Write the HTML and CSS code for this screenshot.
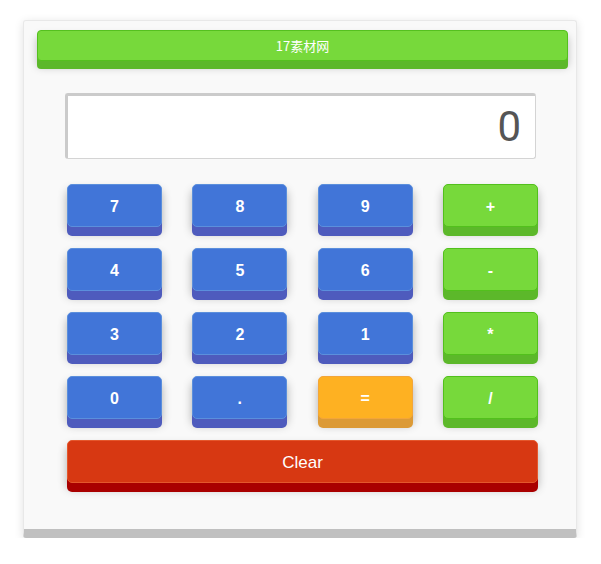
FILE: index.html
```html
<!DOCTYPE html>
<html>
<head>
<meta charset="utf-8">
<link rel="stylesheet" href="styles.css">
</head>
<body>
<div class="calc">
  <div class="title">17素材网</div>
  <div class="display">0</div>
  <div class="keys">
    <div class="key blue">7</div>
    <div class="key blue">8</div>
    <div class="key blue">9</div>
    <div class="key green">+</div>
    <div class="key blue">4</div>
    <div class="key blue">5</div>
    <div class="key blue">6</div>
    <div class="key green">-</div>
    <div class="key blue">3</div>
    <div class="key blue">2</div>
    <div class="key blue">1</div>
    <div class="key green">*</div>
    <div class="key blue">0</div>
    <div class="key blue">.</div>
    <div class="key orange">=</div>
    <div class="key green">/</div>
    <div class="key red clear">Clear</div>
  </div>
</div>
</body>
</html>
```

FILE: styles.css
```css
html, body {
  margin: 0;
  padding: 0;
  background: #ffffff;
}
.calc {
  box-sizing: border-box;
  width: 554px;
  margin: 20px 0 0 23px;
  padding: 9px 8px 46px 13px;
  background: #f9f9f9;
  border: 1px solid #e8e8e8;
  border-bottom: 9px solid #c0c0c0;
  border-radius: 3px;
  box-shadow: 0 2px 10px rgba(0,0,0,0.12);
  display: flex;
  flex-direction: column;
  font-family: "Liberation Sans", Arial, sans-serif;
}
.title {
  box-sizing: border-box;
  height: 31px;
  background: #77d93b;
  border: 1px solid #55c01f;
  border-radius: 4px;
  box-shadow: 0 8px 0 #5cb82a, 0 6px 8px rgba(0,0,0,0.25);
  color: #ffffff;
  font-family: "Noto Sans CJK SC", "Liberation Sans", sans-serif;
  font-size: 13px;
  line-height: 29px;
  text-align: center;
}
.display {
  box-sizing: border-box;
  height: 66px;
  margin: 32px 32px 0 28px;
  background: #ffffff;
  border-style: solid;
  border-color: #cbcbcb #d4d4d4 #d4d4d4 #cbcbcb;
  border-width: 3px 1px 1px 3px;
  border-radius: 3px;
  padding-right: 14px;
  text-align: right;
  color: #555555;
  font-family: Roboto, "Liberation Sans", sans-serif;
  font-size: 42px;
  line-height: 62px;
}
.keys {
  margin: 25px 30px 0 30px;
  display: grid;
  grid-template-columns: repeat(4, 95px);
  grid-auto-rows: 43px;
  row-gap: 21px;
  justify-content: space-between;
}
.key {
  box-sizing: border-box;
  border-radius: 5px;
  border: 1px solid;
  color: #ffffff;
  font-weight: bold;
  font-size: 16px;
  display: flex;
  align-items: center;
  justify-content: center;
  padding-top: 3px;
}
.blue {
  background: #4175d8;
  border-color: #5b8fdc;
  box-shadow: 0 9px 0 #4e5bbd, 0 6px 10px rgba(0,0,0,0.3);
}
.green {
  background: #77d93b;
  border-color: #52c01c;
  box-shadow: 0 9px 0 #5cb82a, 0 6px 10px rgba(0,0,0,0.3);
}
.orange {
  background: #feb122;
  border-color: #f3a63a;
  box-shadow: 0 9px 0 #dc9a36, 0 6px 10px rgba(0,0,0,0.3);
}
.red {
  background: #d73812;
  border-color: #e4572c;
  box-shadow: 0 9px 0 #a90000, 0 6px 10px rgba(0,0,0,0.3);
}
.clear {
  grid-column: 1 / -1;
  font-weight: normal;
  font-size: 17px;
}
```
